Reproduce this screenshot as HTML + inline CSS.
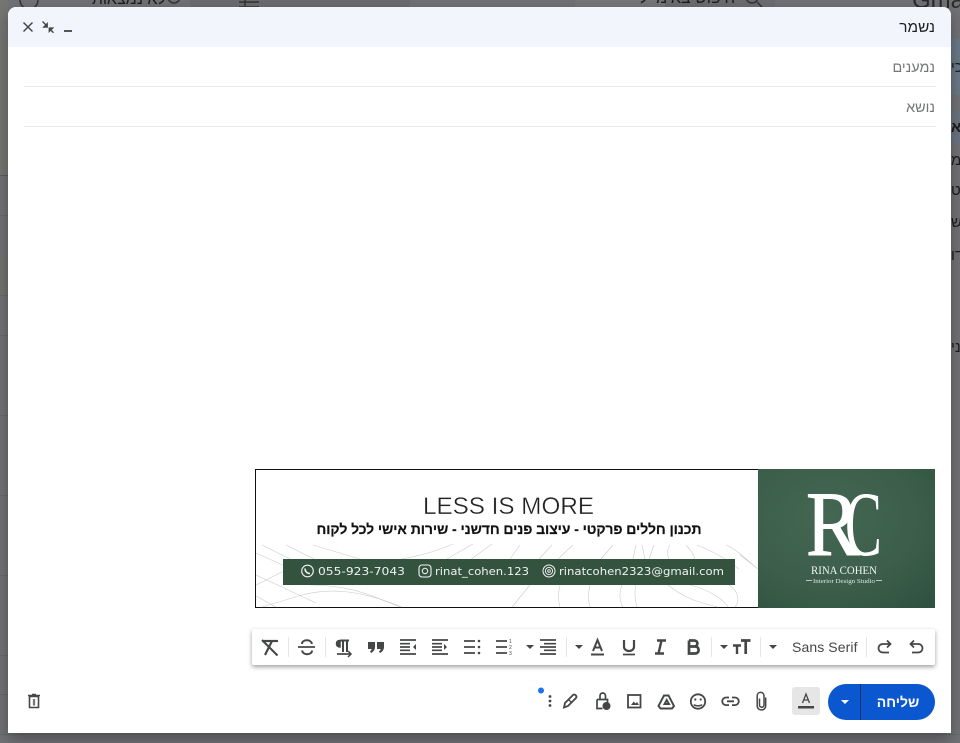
<!DOCTYPE html>
<html lang="he">
<head>
<meta charset="utf-8">
<title>Compose</title>
<style>
html,body{margin:0;padding:0;width:960px;height:743px;overflow:hidden;background:#707174;font-family:"Liberation Sans","Noto Sans CJK JP",sans-serif}
.a{position:absolute}
.bgt{position:absolute;color:#1c1c1c;white-space:nowrap;direction:rtl}
#dlg{left:8px;top:7px;width:943px;height:726px;background:#fff;border-radius:8px 8px 0 0;box-shadow:0 6px 14px rgba(0,0,0,.3);overflow:hidden}
.line{position:absolute;left:16px;width:912px;height:1px;background:#ebebeb}
.lab{position:absolute;right:16px;font-size:14.4px;line-height:20px;direction:rtl;color:#747775}
.edge{position:absolute;left:0;color:#1c1c1c;font-size:15px;white-space:nowrap;direction:ltr;unicode-bidi:bidi-override}
</style>
</head>
<body>
<!-- dimmed background -->
<div class="a" style="left:0;top:0;width:960px;height:743px;background:#707174"></div>
<div class="a" style="left:0;top:0;width:8px;height:175px;background:#747472"></div>
<div class="a" style="left:0;top:175px;width:8px;height:1px;background:#5c5c60"></div>
<div class="a" style="left:0;top:255px;width:8px;height:40px;background:#71716d"></div>
<div class="a" style="left:0;top:215px;width:8px;height:1px;background:#67686b"></div>
<div class="a" style="left:0;top:295px;width:8px;height:1px;background:#67686b"></div>
<div class="a" style="left:0;top:335px;width:8px;height:1px;background:#67686b"></div>
<div class="a" style="left:0;top:415px;width:8px;height:1px;background:#67686b"></div>
<div class="a" style="left:0;top:495px;width:8px;height:1px;background:#67686b"></div>
<div class="a" style="left:0;top:575px;width:8px;height:1px;background:#67686b"></div>
<div class="a" style="left:0;top:655px;width:8px;height:1px;background:#67686b"></div>
<div class="a" style="left:0;top:694px;width:8px;height:1px;background:#67686b"></div>
<div class="a" style="left:0;top:734px;width:960px;height:1px;background:#67686b"></div>
<div class="a" style="left:951px;top:39px;width:9px;height:56px;background:#687886"></div>
<div class="a" style="left:951px;top:111px;width:9px;height:32px;background:#6a7280"></div>
<div class="a" style="left:190px;top:0;width:220px;height:7px;background:#6a6b6e"></div>
<div class="a" style="left:575px;top:0;width:90px;height:7px;background:#747577"></div>
<div class="a" style="left:665px;top:0;width:110px;height:7px;background:#6b6c70"></div>
<div class="bgt" style="left:90px;top:-9px;font-size:16px;width:76px">לא נמצאות</div>
<div class="bgt" style="left:640px;top:-10px;font-size:16px;width:95px">חיפוש באימייל</div>
<div class="a" style="left:912px;top:-13px;font-size:24px;color:#2a2a2a">Gmail</div>
<div class="a" style="left:951px;top:0;width:9px;height:743px;overflow:hidden">
  <div class="edge" style="top:59px">יכ</div>
  <div class="edge" style="top:119px;font-weight:bold">אי</div>
  <div class="edge" style="top:152px">מס</div>
  <div class="edge" style="top:182px">טט</div>
  <div class="edge" style="top:214px">של</div>
  <div class="edge" style="top:247px">וד</div>
  <div class="edge" style="top:339px">ינ</div>
</div>
<svg class="a" style="left:0;top:0" width="960" height="7" viewBox="0 0 960 7" fill="none" stroke="#333" stroke-width="1.5">
<circle cx="29" cy="0" r="9"/><circle cx="174" cy="-3" r="6"/>
<path d="M239 2h20M245 -2v8M239 7h20"/><circle cx="752" cy="-3" r="6"/><path d="M757 2l6 6"/>
</svg>

<div id="dlg" class="a">
  <div class="a" style="left:0;top:0;width:943px;height:40px;background:#f2f6fc"></div>
  <div class="a" style="right:16px;top:10.500px;font-size:15.4px;line-height:20px;direction:rtl;color:#1f1f1f">נשמר</div>
  <div class="lab" style="top:50.500px">נמענים</div>
  <div class="line" style="top:79px"></div>
  <div class="lab" style="top:90.500px">נושא</div>
  <div class="line" style="top:119px"></div>
</div>

<!-- banner -->
<svg class="a" style="left:255px;top:469px" width="680" height="139" viewBox="255 469 680 139">
  <defs>
    <radialGradient id="gr" cx="0.4" cy="0.35" r="0.85">
      <stop offset="0" stop-color="#446753"/>
      <stop offset="0.6" stop-color="#3b5d49"/>
      <stop offset="1" stop-color="#2f5240"/>
    </radialGradient>
  </defs>
  <rect x="255.5" y="469.5" width="503" height="138" fill="#fff" stroke="#111"/>
  <g fill="none" stroke="#c8cdca" stroke-width=".6">
    <path d="M262 545l50 25 M256 553l60 27 M256 575l60 28 M256 596l20 11 M286 545l40 20 M313 545l50 15"/>
    <path d="M256 585l30 -15 M262 607l40-12c30-8 60-4 100 12"/>
    <path d="M395 560c20-3 40-8 58-16 M445 560l28-16 M470 560l22-16 M520 545l-10 14M552 545l-13 14M573 545l-15 14M613 545l-12 14"/>
    <path d="M530 585l-18 22M310 585c40 0 60 10 90 22"/>
    <path d="M636 545l-3 14M642 545l3 14M654 545l-5 14M670 545c-3 4-3 10-1 14M686 545c4 4 8 10 9 14M697 545c15 6 30 14 42 24M726 545c10 4 22 16 32 24M740 555l18 14"/>
    <path d="M560 585c-2 8-2 15 0 22M590 585c-2 8-2 15 0 22M622 585c-3 8-3 15 1 22M636 585c-2 8-1 15 1 22M668 585c10 8 22 16 50 22M690 585c20 5 34 15 38 22M729 585c8 5 12 15 6 22"/>
  </g>
  <text x="508.5" y="514" text-anchor="middle" font-size="24" fill="#222" stroke="#fff" stroke-width=".35" textLength="171" lengthAdjust="spacingAndGlyphs">LESS IS MORE</text>
  <text x="509" y="534" text-anchor="middle" font-size="14" font-weight="bold" fill="#111" stroke="#111" stroke-width=".2" direction="rtl" textLength="385" lengthAdjust="spacing">תכנון חללים פרקטי - עיצוב פנים חדשני - שירות אישי לכל לקוח</text>
  <rect x="283" y="559" width="452" height="26" fill="#34533f"/>
  <g fill="#eef2ef" font-size="11" font-family="DejaVu Sans">
    <text x="318" y="575" textLength="87" lengthAdjust="spacingAndGlyphs">055-923-7043</text>
    <text x="435" y="575" textLength="94" lengthAdjust="spacingAndGlyphs">rinat_cohen.123</text>
    <text x="559" y="575" textLength="165" lengthAdjust="spacingAndGlyphs">rinatcohen2323@gmail.com</text>
  </g>
  <g fill="none" stroke="#f2f5f3">
    <circle cx="307.500" cy="571" r="5.800" stroke-width="1.100"/>
    <path d="M305 568.500c0 3 2 5 5 5" stroke-width="1.500"/>
    <rect x="419" y="565" width="12" height="12" rx="3" stroke-width="1.100"/>
    <circle cx="425" cy="571" r="2.700" stroke-width="1"/>
    <circle cx="549" cy="571" r="6" stroke-width="1"/>
    <circle cx="549" cy="571" r="3.600" stroke-width=".9"/>
    <circle cx="549" cy="571" r="1.300" stroke-width=".9"/>
  </g>
  <rect x="758" y="469" width="177" height="139" fill="url(#gr)"/>
  <g font-family="Liberation Serif" fill="#fff">
    <text transform="translate(806 555) scale(.88 1)" font-size="92" stroke="#fff" stroke-width="1">R</text>
    <text transform="translate(845 555) scale(.6 1)" font-size="92">C</text>
  </g>
  <text x="844" y="574" text-anchor="middle" font-family="Liberation Serif" font-size="12" fill="#f2f5f3" textLength="66" lengthAdjust="spacingAndGlyphs">RINA COHEN</text>
  <path d="M806 580.500h6M876 580.500h6" stroke="#e6ece8" stroke-width=".8"/>
  <text x="844" y="583" text-anchor="middle" font-family="Liberation Serif" font-size="6" fill="#dfe6e2" textLength="62" lengthAdjust="spacingAndGlyphs">Interior Design Studio</text>
</svg>

<!-- toolbar -->
<div class="a" style="left:252px;top:629px;width:683px;height:36px;background:#fff;border-radius:2px;box-shadow:0 2px 5px rgba(0,0,0,.38)"></div>
<div class="a" style="left:792px;top:639px;font-size:14px;line-height:16px;color:#444746;width:68px;letter-spacing:.1px">Sans Serif</div>

<svg class="a" style="left:0;top:0" width="960" height="743" viewBox="0 0 960 743">
  <!-- header icons -->
  <g stroke="#444746" fill="none">
    <path d="M23.500 22.500l9 9M32.500 22.500l-9 9" stroke-width="1.500"/>
    <path d="M42.500 21.500l3.500 3.500M53.500 32.800l-3.500-3.500" stroke-width="1.400"/>
    <path d="M47.500 23v4.300h-4.300z M49 32v-4.200h4.300z" fill="#444746" stroke-width=".8"/>
    <path d="M64 31h8" stroke-width="1.800"/>
  </g>
  <!-- toolbar dividers -->
  <g fill="#e6e6e6">
    <rect x="288" y="637" width="1" height="20"/><rect x="325" y="637" width="1" height="20"/>
    <rect x="566" y="637" width="1" height="20"/><rect x="711" y="637" width="1" height="20"/>
    <rect x="760" y="637" width="1" height="20"/><rect x="866" y="637" width="1" height="20"/>
  </g>
  <!-- triangles -->
  <g fill="#444746">
    <path d="M526 645h8l-4 4z M575 645h8l-4 4z M720 645h8l-4 4z M769 645h8l-4 4z"/>
  </g>
  <g stroke="#444746" fill="none">
    <!-- remove format -->
    <path d="M262 641h16" stroke-width="2.200"/><path d="M272 641l-7 14" stroke-width="2.200"/>
    <path d="M262 640l15.500 15.500" stroke-width="2"/>
    <!-- strike -->
    <path d="M298 647h17" stroke-width="1.700"/>
    <path d="M312 644c-.5-2.300-2.500-3.700-5-3.700-3 0-5 1.400-5 3.700M302 650.500c.5 2.300 2.500 3.700 5 3.700 3 0 5-1.400 5-3.700" stroke-width="2"/>
    <!-- rtl para -->
    <path d="M340 640.500h9M343 641v11M347 641v11" stroke-width="2"/>
    <path d="M340 640.500c-3 0-3.500 2-3.500 3.300 0 2 1.500 3.200 3.500 3.200z" fill="#444746" stroke-width="1.500"/>
    <path d="M337 654h14" stroke-width="1.700"/><path d="M348 651l3 3-3 3" stroke-width="1.500"/>
    <!-- indent -->
    <g stroke-width="1.700">
      <path d="M400 640h16M400 654h16M400 643.700h10M400 647h10M400 650.300h10"/>
      <path d="M432 640h16M432 654h16M432 643.700h10M432 647h10M432 650.300h10"/>
      <path d="M464 641h11M464 647h11M464 653h11"/>
      <path d="M496 641h11M496 647h11M496 653h11"/>
      <path d="M540 640h16M544 643.700h12M540 647h16M544 650.300h12M540 654h16"/>
    </g>
    <!-- A U I B -->
    <path d="M591 654.500h13" stroke-width="2"/>
    <path d="M593 651l4.500-11 4.500 11M594.500 647.500h6" stroke-width="2"/>
    <path d="M624 640v6.500c0 6 10 6 10 0V640" stroke-width="2.200"/><path d="M623 654.500h12" stroke-width="1.700"/>
    <path d="M657 640.500h9M655 653.500h9M661.500 640.500l-3 13" stroke-width="2.400"/>
    <path d="M689 640.500h5c4.500 0 4.500 6 0 6h-5v-6M689 646.500h6c4.800 0 4.800 7 0 7h-6z" stroke-width="2.700"/>
    <!-- tT -->
    <path d="M733 645.500h8M737 645.500v8.500" stroke-width="2.400"/><path d="M741 640.500h9.500M745.700 640.500v13.500" stroke-width="2.700"/>
    <!-- redo / undo -->
    <path d="M890 644h-7c-2.800 0-4.500 2-4.500 4.300 0 2.300 1.700 4.200 4.500 4.200h6" stroke-width="1.800"/>
    <path d="M887 640.500l3.500 3.500-3.500 3.500" stroke-width="1.800"/>
    <path d="M911 644h7c2.800 0 4.500 2 4.500 4.300 0 2.300-1.700 4.200-4.500 4.200h-6" stroke-width="1.800"/>
    <path d="M914 640.500l-3.500 3.500 3.500 3.500" stroke-width="1.800"/>
    <!-- bottom icons -->
    <path d="M564 707.500l1-4.500 8-8c1.500-1.500 4.500 1 3 3l-8 8z" stroke-width="1.800"/>
    <path d="M568 699l3.500 3.500" stroke-width="1.300"/>
    <path d="M597 699.500h10.500v3M597 699.500v9h5.500M600 699v-3c0-4 5.500-4 5.500 0v3" stroke-width="1.700"/>
    <rect x="628" y="695" width="12.500" height="12.500" stroke-width="1.800"/>
    <path d="M658.500 706l5.500-10.500h4.500l5.500 10.500-2 2.500h-11.500z M664.500 704h4.500l-2.300-4z" stroke-width="1.900"/>
    <circle cx="698" cy="701.500" r="7.200" stroke-width="1.800"/>
    <path d="M694 704.500c1.500 1.800 6.500 1.800 8 0" stroke-width="1.500"/>
    <path d="M729 697.500h-3a3.800 3.800 0 0 0 0 7.600h3M732 697.500h3a3.800 3.800 0 0 1 0 7.600h-3M727 701.300h7" stroke-width="1.800"/>
    <path d="M759 699v6.500c0 3 4.500 3 4.500-.2v-9c0-4.500-6.800-4.500-6.800 0v10c0 5.500 8.500 5.500 8.500 0V698" stroke-width="1.500" transform="translate(.5 -.5)"/>
    <!-- trash -->
    <path d="M29.500 696.500h9v11h-9z" stroke-width="1.600"/>
    <path d="M28 695.500h12M32 694.500h4" stroke-width="1.400"/>
    <path d="M34 699v6.500" stroke-width="2.300" stroke="#777"/>
  </g>
  <g fill="#444746">
    <path d="M414 644l-3 3 3 3z" transform="translate(2 0)"/>
    <path d="M444 644l3 3-3 3z"/>
    <circle cx="479" cy="641" r="1.300"/><circle cx="479" cy="647" r="1.300"/><circle cx="479" cy="653" r="1.300"/>
    <path d="M368 642h7v5c0 3-2 5-4 6l-1-1.500c1-.8 1.500-1.500 1.600-2.500H368z M377 642h7v5c0 3-2 5-4 6l-1-1.500c1-.8 1.500-1.500 1.600-2.500H377z"/>
    <circle cx="550" cy="696.500" r="1.400"/><circle cx="550" cy="701" r="1.400"/><circle cx="550" cy="705.500" r="1.400"/>
    <circle cx="606.500" cy="706" r="4"/>
    <path d="M631 705l2.800-3.500 1.700 2 1.500-1.500 2 3z"/>
    <circle cx="695.300" cy="699.500" r="1.100"/><circle cx="700.700" cy="699.500" r="1.100"/>
  </g>
  <text x="509" y="643" font-size="5" fill="#444746">1</text>
  <text x="509" y="649" font-size="5" fill="#444746">2</text>
  <text x="509" y="655" font-size="5" fill="#444746">3</text>
  <circle cx="541" cy="690.500" r="3" fill="#1a73e8"/>
  <!-- text colour button -->
  <rect x="792" y="687" width="28" height="28" rx="3" fill="#e6e6e6"/>
  <path d="M802.500 703l3.500-9 3.500 9M803.700 700h4.700" fill="none" stroke="#444746" stroke-width="1.300"/>
  <rect x="798" y="706" width="16" height="2.500" fill="#444746"/>
  <!-- send -->
  <rect x="828" y="684" width="107" height="36" rx="18" fill="#0b57d0"/>
  <rect x="860" y="684" width="1" height="36" fill="#0a2f6b"/>
  <path d="M841 700h8l-4 4z" fill="#fff"/>
</svg>
<div class="a" style="left:861px;top:692px;width:74px;text-align:center;font-size:14px;line-height:20px;font-weight:bold;color:#fff;direction:rtl">שליחה</div>
</body>
</html>
